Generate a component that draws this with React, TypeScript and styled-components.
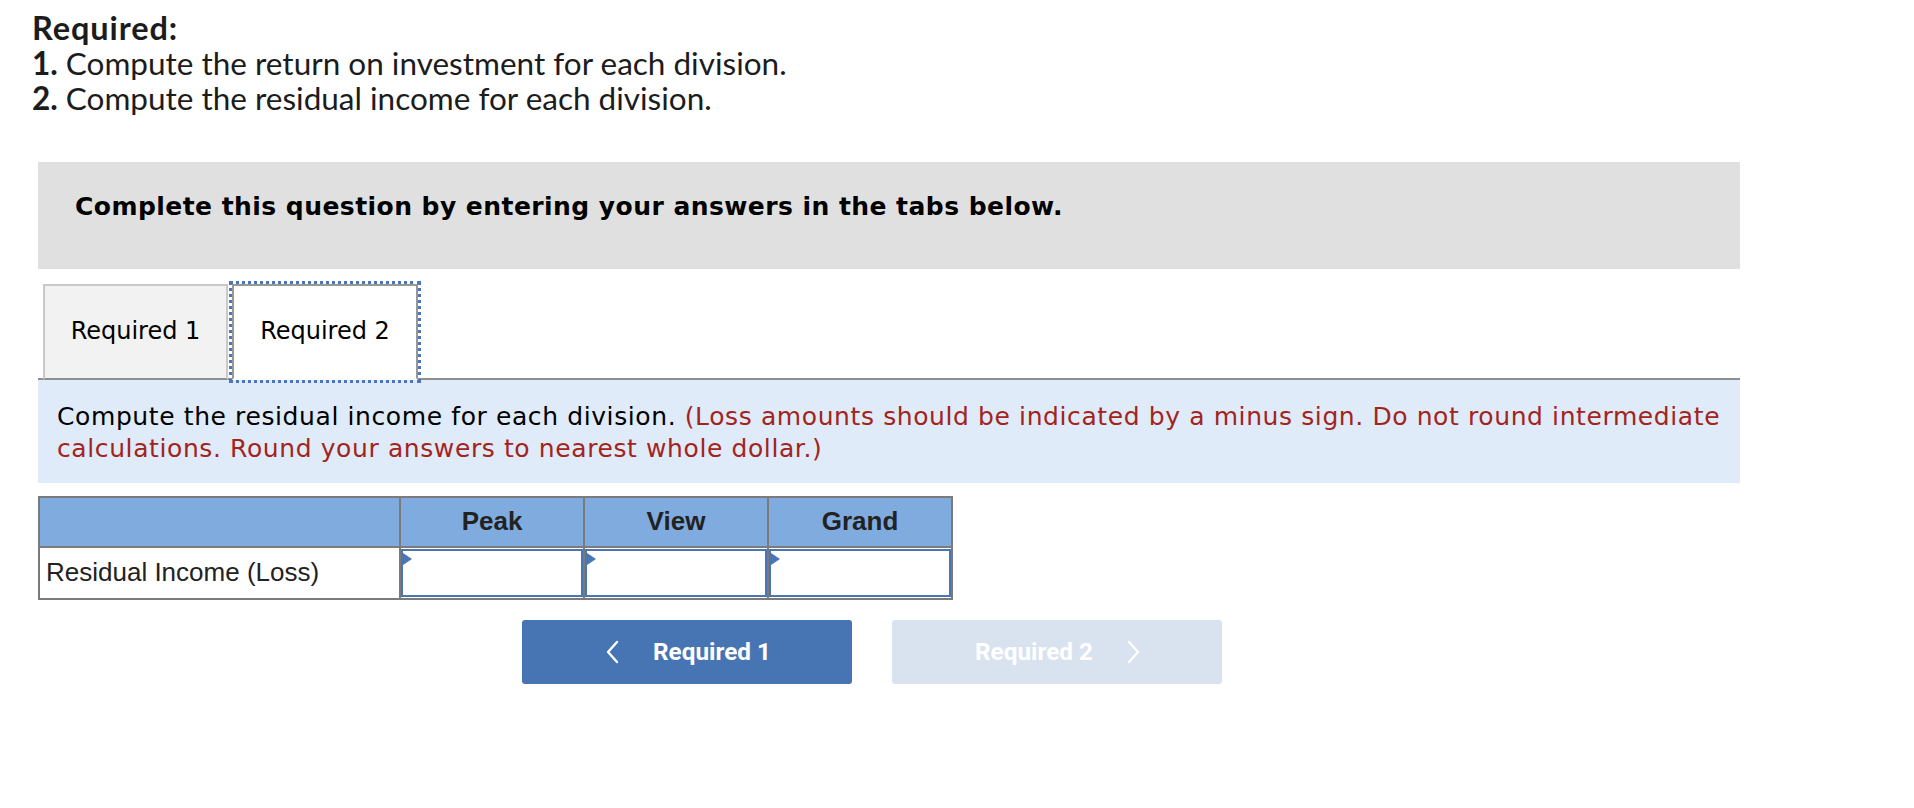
import React from "react";
import styled, { createGlobalStyle } from "styled-components";

const GlobalStyle = createGlobalStyle`
  html, body { margin: 0; padding: 0; background: #ffffff; }
  * { box-sizing: border-box; }
`;

const Page = styled.div`
  width: 1914px;
  min-height: 808px;
  background: #ffffff;
`;

const Intro = styled.div`
  padding: 10px 0 0 32px;
  font-family: Lato, "Open Sans", sans-serif;
  font-size: 31.5px;
  line-height: 35.5px;
  color: #1c1c1c;
`;

const IntroLine = styled.div``;

const Title = styled.div`
  font-weight: 700;
  font-size: 32.5px;
  letter-spacing: 0.9px;
`;

const Strong = styled.span`
  font-weight: 700;
`;

const Main = styled.div`
  margin: 45px 0 0 38px;
  width: 1702px;
`;

const Banner = styled.div`
  height: 107px;
  background: #e0e0e0;
  padding: 30px 37px 0;
  font-family: "DejaVu Sans", Verdana, sans-serif;
  font-weight: 700;
  font-size: 25px;
  letter-spacing: 0.45px;
  line-height: 29px;
  color: #000;
`;

const TabList = styled.div`
  margin-top: 11px;
  height: 100px;
  display: flex;
  align-items: flex-end;
  border-bottom: 2px solid #8e8e8e;
  padding-left: 5px;
`;

const Tab = styled.div<{ $active?: boolean }>`
  height: 96px;
  width: ${(p) => (p.$active ? "186px" : "185px")};
  margin-left: ${(p) => (p.$active ? "4px" : "0")};
  margin-bottom: -2px;
  display: flex;
  align-items: center;
  justify-content: center;
  padding-bottom: 2px;
  font-family: "DejaVu Sans", Verdana, sans-serif;
  font-size: 24px;
  color: #000;
  background: ${(p) => (p.$active ? "#ffffff" : "#f2f2f2")};
  border: 2px solid ${(p) => (p.$active ? "#979797" : "#c9c9c9")};
  border-bottom: 2px solid ${(p) => (p.$active ? "#ffffff" : "#8e8e8e")};
  outline: ${(p) => (p.$active ? "3px dotted #4a76c0" : "none")};
  outline-offset: 0;
`;

const Instructions = styled.div`
  background: #dfebf8;
  padding: 21px 8px 18px 19px;
  font-family: "DejaVu Sans", Verdana, sans-serif;
  font-size: 25px;
  letter-spacing: 0.6px;
  line-height: 32px;
  color: #000;
`;

const Note = styled.span`
  color: #a3231d;
`;

const Grid = styled.table`
  margin-top: 13px;
  border-collapse: collapse;
  table-layout: fixed;
  width: 913px;
  font-family: "Liberation Sans", Arial, sans-serif;
  font-size: 26px;
  color: #222;
`;

const HeadCell = styled.th`
  height: 50px;
  background: #80abdf;
  border: 2px solid #7b7b7b;
  font-weight: 700;
  text-align: center;
  padding: 0;
`;

const LabelCell = styled.td`
  height: 52px;
  border: 2px solid #7b7b7b;
  padding: 0 0 0 6px;
  white-space: nowrap;
`;

const InputCell = styled.td`
  height: 52px;
  border: 2px solid #7b7b7b;
  padding: 0;
`;

const InputBox = styled.div`
  position: relative;
  height: 48px;
  border: 2px solid #4a77b4;
  background: #fff;
`;

const Flag = styled.span`
  position: absolute;
  left: 0;
  top: 2px;
  width: 0;
  height: 0;
  border-top: 6px solid transparent;
  border-bottom: 6px solid transparent;
  border-left: 9px solid #4a77b4;
`;

const NavRow = styled.div`
  margin-top: 20px;
  padding-left: 484px;
  display: flex;
  gap: 40px;
`;

const NavButton = styled.button<{ $disabled?: boolean }>`
  width: 330px;
  height: 64px;
  border: none;
  border-radius: 3px;
  background: ${(p) => (p.$disabled ? "#d9e3ef" : "#4775b3")};
  color: #ffffff;
  display: flex;
  align-items: center;
  justify-content: center;
  gap: 33px;
  font-family: Roboto, "Liberation Sans", sans-serif;
  font-weight: 700;
  font-size: 24.3px;
  padding: 0 0 0 2px;
  cursor: ${(p) => (p.$disabled ? "default" : "pointer")};
`;

const Chevron = ({ dir }: { dir: "left" | "right" }) => (
  <svg width="15" height="24" viewBox="0 0 15 24" fill="none">
    <path
      d={dir === "left" ? "M12 2 L3 12 L12 22" : "M3 2 L12 12 L3 22"}
      stroke="#ffffff"
      strokeWidth="2.4"
      strokeLinecap="round"
      strokeLinejoin="round"
    />
  </svg>
);

const Answer = () => (
  <InputCell>
    <InputBox>
      <Flag />
    </InputBox>
  </InputCell>
);

export default function App() {
  return (
    <Page>
      <GlobalStyle />
      <Intro>
        <Title>Required:</Title>
        <IntroLine>
          <Strong>1.</Strong> Compute the return on investment for each division.
        </IntroLine>
        <IntroLine>
          <Strong>2.</Strong> Compute the residual income for each division.
        </IntroLine>
      </Intro>
      <Main>
        <Banner>Complete this question by entering your answers in the tabs below.</Banner>
        <TabList>
          <Tab>Required 1</Tab>
          <Tab $active>Required 2</Tab>
        </TabList>
        <Instructions>
          Compute the residual income for each division.{" "}
          <Note>
            (Loss amounts should be indicated by a minus sign. Do not round intermediate
            calculations. Round your answers to nearest whole dollar.)
          </Note>
        </Instructions>
        <Grid>
          <colgroup>
            <col style={{ width: 361 }} />
            <col style={{ width: 184 }} />
            <col style={{ width: 184 }} />
            <col style={{ width: 184 }} />
          </colgroup>
          <thead>
            <tr>
              <HeadCell />
              <HeadCell>Peak</HeadCell>
              <HeadCell>View</HeadCell>
              <HeadCell>Grand</HeadCell>
            </tr>
          </thead>
          <tbody>
            <tr>
              <LabelCell>Residual Income (Loss)</LabelCell>
              <Answer />
              <Answer />
              <Answer />
            </tr>
          </tbody>
        </Grid>
        <NavRow>
          <NavButton>
            <Chevron dir="left" />
            <span>Required 1</span>
          </NavButton>
          <NavButton $disabled disabled>
            <span>Required 2</span>
            <Chevron dir="right" />
          </NavButton>
        </NavRow>
      </Main>
    </Page>
  );
}
